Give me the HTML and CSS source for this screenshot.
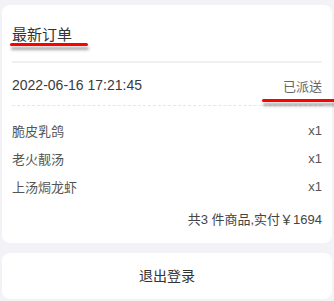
FILE: index.html
```html
<!DOCTYPE html>
<html lang="zh-CN">
<head>
  <meta charset="UTF-8" />
  <meta name="viewport" content="width=device-width, initial-scale=1.0" />
  <title>最新订单</title>
  <link rel="stylesheet" href="styles.css">
</head>
<body>
  <!-- 最新订单卡片 -->
  <div class="card order">
    <div class="order-title">最新订单</div>
    <div class="order-info">
      <span class="order-time">2022-06-16 17:21:45</span>
      <span class="order-status">已派送</span>
    </div>
    <div class="order-goods">
      <div class="goods-row"><span>脆皮乳鸽</span><span>x1</span></div>
      <div class="goods-row"><span>老火靓汤</span><span>x1</span></div>
      <div class="goods-row"><span>上汤焗龙虾</span><span>x1</span></div>
    </div>
    <div class="order-total">共3 件商品,实付￥1694</div>
  </div>

  <!-- 退出登录 -->
  <div class="card logout">退出登录</div>

  <!-- 标注的红线 -->
  <div class="mark mark-title"></div>
  <div class="mark mark-status"></div>
</body>
</html>
```

FILE: styles.css
```css
/* ===== 通用 ===== */
body {
  margin: 0;
  padding: 5px 2px 0;
  background: #f3f3f7;
  font-family: "Liberation Sans", "Noto Sans CJK SC", sans-serif;
  color: #333;
  position: relative;
  height: 301px;
  box-sizing: border-box;
  overflow: hidden;
}
.card {
  background: #fff;
  border-radius: 8px;
}
/* ===== 订单卡片 ===== */
.order {
  padding: 0 10px 9px;
}
.order-title {
  height: 56px;
  display: flex;
  align-items: center;
  font-size: 15px;
  color: #333;
  border-bottom: 2px solid #f0f0f0;
}
.order-info {
  height: 43px;
  padding-top: 2px;
  box-sizing: border-box;
  display: flex;
  justify-content: space-between;
  align-items: center;
  font-size: 14px;
  color: #3a3a3a;
  border-bottom: 1px dashed #e6e6e6;
}
.order-status {
  font-size: 13px;
  color: #666;
}
.order-goods {
  padding-top: 10px;
}
.goods-row {
  height: 28px;
  display: flex;
  justify-content: space-between;
  align-items: center;
  font-size: 13px;
  color: #555;
}
.order-total {
  margin-top: 6px;
  line-height: 28px;
  text-align: right;
  font-size: 13px;
  color: #444;
}
/* ===== 退出登录 ===== */
.logout {
  margin-top: 10px;
  height: 46px;
  line-height: 46px;
  text-align: center;
  font-size: 14px;
  color: #333;
}
/* ===== 红线标注 ===== */
.mark {
  position: absolute;
  height: 3px;
  background: #ff0000;
  border-radius: 2px;
  box-shadow: 1px 4px 3px rgba(0, 0, 0, 0.35);
}
.mark-title {
  left: 10px;
  top: 43px;
  width: 78px;
}
.mark-status {
  left: 262px;
  top: 99px;
  width: 74px;
}
```
